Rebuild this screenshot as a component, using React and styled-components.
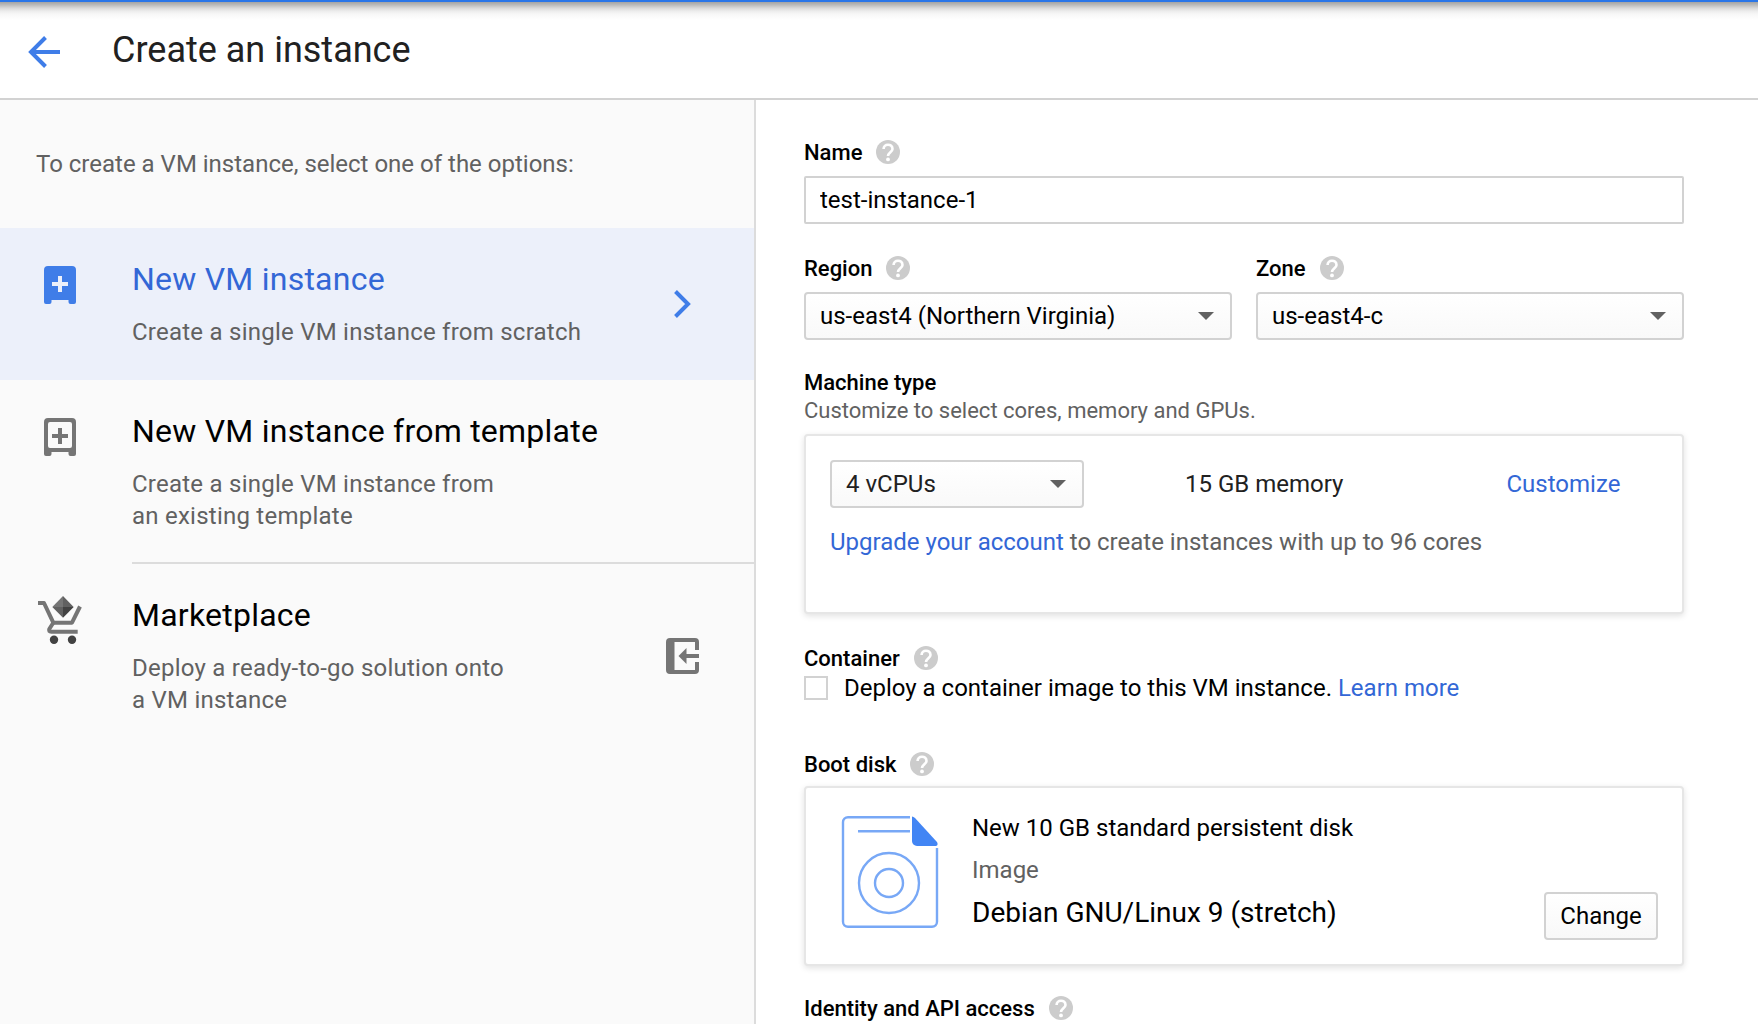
import React from "react";
import styled, { createGlobalStyle } from "styled-components";

const Global = createGlobalStyle`
  *, *::before, *::after { box-sizing: border-box; }
  html, body { margin: 0; padding: 0; background: #fff; }
  body {
    font-family: Roboto, "Liberation Sans", sans-serif;
    font-size: 24px;
    line-height: 32px;
    color: #000;
    overflow: hidden;
  }
  button, input { font: inherit; color: inherit; margin: 0; }
`;

const Page = styled.div`
  display: flex;
  flex-direction: column;
  height: 1024px;
  overflow: hidden;
`;

const Header = styled.header`
  flex: none;
  display: flex;
  align-items: center;
  height: 100px;
  padding-left: 28px;
  border-top: 2px solid #2a76e8;
  border-bottom: 2px solid #d2d2d2;
  background: linear-gradient(#a4a4a4 0, #bcbcbc 3px, #d8d8d8 6px, #ececec 9px, #f7f7f7 12px, #fff 18px);
`;

const BackArrow = styled.svg`
  width: 33px;
  height: 32px;
  margin: 4px 51px 0 0;
`;

const PageTitle = styled.h1`
  margin: 0;
  font-size: 36px;
  font-weight: 400;
  line-height: 48px;
  color: #212121;
`;

const Body = styled.div`
  flex: 1;
  display: flex;
  min-height: 0;
`;

const Sidebar = styled.nav`
  flex: none;
  width: 756px;
  border-right: 2px solid #dcdcdc;
  background: #fafafa;
`;

const Intro = styled.p`
  margin: 0;
  height: 128px;
  padding: 48px 36px 0;
  color: #616161;
`;

const Option = styled.a`
  display: flex;
  height: ${(p) => (p.$tall ? 184 : 152)}px;
  background: ${(p) => (p.$selected ? "#ecf0fa" : "transparent")};
  color: ${(p) => (p.$selected ? "#3367d6" : "#000")};
`;

const OptionIcon = styled.div`
  flex: none;
  width: 132px;
  padding: ${(p) => p.$pad};
  svg { display: block; }
`;

const OptionMain = styled.div`
  flex: 1;
  display: flex;
  align-items: center;
  border-bottom: ${(p) => (p.$divided ? "2px solid #dcdcdc" : "0")};
`;

const OptionText = styled.div`
  flex: 1;
  align-self: flex-start;
  padding-top: 31px;
`;

const OptionTitle = styled.div`
  font-size: 32px;
  line-height: 40px;
  letter-spacing: 0.24px;
`;

const OptionDesc = styled.div`
  margin-top: 17px;
  line-height: 32px;
  letter-spacing: 0.24px;
  color: #616161;
  white-space: pre-line;
`;

const OptionAction = styled.div`
  flex: none;
  width: 88px;
  svg { display: block; }
`;

const Form = styled.main`
  width: 928px;
  padding: 38px 0 0 48px;
  display: flex;
  flex-direction: column;
`;

const Label = styled.div`
  display: flex;
  align-items: center;
  gap: 14px;
  height: 28px;
  font-size: 22px;
  line-height: 28px;
  font-weight: 500;
  svg { flex: none; display: block; }
`;

const LabelText = styled.span`
  padding-top: 2px;
`;

const Field = styled.div`
  display: flex;
  flex-direction: column;
  gap: 10px;
`;

const FieldRow = styled.div`
  display: grid;
  grid-template-columns: 1fr 1fr;
  gap: 24px;
  margin-top: 30px;
`;

const TextInput = styled.input`
  width: 100%;
  height: 48px;
  padding: 0 14px;
  border: 2px solid #d2d2d2;
  border-radius: 2px;
  background: #fff;
  outline: 0;
`;

const SelectBox = styled.button`
  display: flex;
  align-items: center;
  justify-content: space-between;
  width: ${(p) => p.$width || "100%"};
  height: 48px;
  padding: 0 16px 0 14px;
  border: 2px solid #d2d2d2;
  border-radius: 4px;
  background: linear-gradient(#fff, #f9f9f9);
`;

const Caret = styled.span`
  width: 0;
  height: 0;
  border: 8px solid transparent;
  border-top-color: #616161;
  border-bottom-width: 0;
`;

const Section = styled.section`
  display: flex;
  flex-direction: column;
  margin-top: ${(p) => p.$top}px;
`;

const Hint = styled.div`
  padding-top: 1px;
  font-size: 22px;
  line-height: 28px;
  color: #616161;
`;

const Card = styled.div`
  height: 180px;
  margin-top: ${(p) => p.$top}px;
  padding: 24px;
  border: 2px solid #e6e6e6;
  border-radius: 4px;
  box-shadow: 0 2px 6px rgba(0, 0, 0, 0.12);
  background: #fff;
`;

const MachineRow = styled.div`
  display: grid;
  grid-template-columns: 355px 321.5px 1fr;
  align-items: center;
  color: #212121;
`;

const Link = styled.a`
  color: #3367d6;
`;

const Upgrade = styled.div`
  margin-top: 18px;
  color: #616161;
`;

const CheckRow = styled.label`
  display: flex;
  align-items: center;
  gap: 16px;
  height: 32px;
`;

const CheckBox = styled.span`
  width: 24px;
  height: 24px;
  border: 2px solid #d2d2d2;
  background: #fff;
`;

const DiskCard = styled(Card)`
  display: flex;
  align-items: flex-start;
`;

const DiskIcon = styled.svg`
  flex: none;
  width: 98px;
  height: 114px;
  margin: 3px 33px 0 11px;
`;

const DiskInfo = styled.div`
  flex: 1;
  display: flex;
  flex-direction: column;
`;

const DiskLine = styled.div`
  font-size: ${(p) => (p.$big ? 28 : 24)}px;
  line-height: ${(p) => p.$lh}px;
  color: ${(p) => (p.$muted ? "#616161" : "#000")};
`;

const PlainButton = styled.button`
  align-self: flex-end;
  width: 114px;
  height: 48px;
  padding: 0;
  border: 2px solid #d2d2d2;
  border-radius: 4px;
  background: linear-gradient(#fff, #f8f8f8);
`;

const Help = () => (
  <svg width="24" height="24" viewBox="0 0 24 24">
    <circle cx="12" cy="12" r="12" fill="#ccc" />
    <path d="M7.600 9C7.600 6.300 9.500 4.700 12 4.700s4.500 1.600 4.500 4.200c0 3.100-4.500 3.600-4.500 7.200" fill="none" stroke="#fff" strokeWidth="2.600" />
    <circle cx="12" cy="19.400" r="1.900" fill="#fff" />
  </svg>
);

const FieldLabel = ({ text, help = true }) => (
  <Label>
    <LabelText>{text}</LabelText>
    {help && <Help />}
  </Label>
);

const Select = ({ value, width }) => (
  <SelectBox type="button" $width={width}>
    {value}
    <Caret />
  </SelectBox>
);

const ServerSolid = () => (
  <svg width="32" height="38" viewBox="0 0 32 38">
    <path fill="#3f7de8" fillRule="evenodd" d="M4 0h24a4 4 0 0 1 4 4v32a2 2 0 0 1-2 2h-3.5a2 2 0 0 1-2-2v-2h-17v2a2 2 0 0 1-2 2H2a2 2 0 0 1-2-2V4a4 4 0 0 1 4-4zM14 10v6H8v4h6v6h4v-6h6v-4h-6v-6z" />
  </svg>
);

const ServerOutline = () => (
  <svg width="32" height="38" viewBox="0 0 32 38">
    <path fill="#757575" fillRule="evenodd" d="M4 0h24a4 4 0 0 1 4 4v32a2 2 0 0 1-2 2h-3.5a2 2 0 0 1-2-2v-2h-17v2a2 2 0 0 1-2 2H2a2 2 0 0 1-2-2V4a4 4 0 0 1 4-4zM6 4a2 2 0 0 0-2 2v22a2 2 0 0 0 2 2h20a2 2 0 0 0 2-2V6a2 2 0 0 0-2-2z" />
    <path fill="#757575" d="M14 10h4v6h6v4h-6v6h-4v-6H8v-4h6z" />
  </svg>
);

const Cart = () => (
  <svg width="44" height="50" viewBox="0 0 44 50">
    <path fill="none" stroke="#757575" strokeWidth="4" strokeLinejoin="round" d="M0 7h6l9.300 19.700H34L42 10.500" />
    <path fill="none" stroke="#757575" strokeWidth="4" strokeLinejoin="round" d="M15.300 26.700L11.300 33q-1 2.700 2 2.700H39.700" />
    <path fill="#757575" d="M25 0L14.300 11H25z" />
    <path fill="#616161" d="M25 0l10.700 11H25zM14.300 11L25 21.700V11z" />
    <path fill="#424242" d="M35.700 11L25 21.700V11z" />
    <circle cx="16" cy="43.700" r="4.200" fill="#424242" />
    <circle cx="34" cy="43.700" r="4.200" fill="#424242" />
  </svg>
);

const ExitIcon = () => (
  <svg width="33" height="36" viewBox="0 0 33 36">
    <path fill="#757575" d="M4 0h25a4 4 0 0 1 4 4v8h-4V4H8.500v28H29v-8h4v8a4 4 0 0 1-4 4H4a4 4 0 0 1-4-4V4a4 4 0 0 1 4-4z" />
    <path fill="#757575" d="M12.500 18L20.500 10v6H33v4H20.500v6z" />
  </svg>
);

export default function App() {
  return (
    <Page>
      <Global />
      <Header>
        <BackArrow viewBox="0 0 33 32">
          <path d="M32 16H3M17.500 1.500L3 16l14.500 14.500" fill="none" stroke="#3f7de8" strokeWidth="4" />
        </BackArrow>
        <PageTitle>Create an instance</PageTitle>
      </Header>
      <Body>
        <Sidebar>
          <Intro>To create a VM instance, select one of the options:</Intro>
          <Option $selected>
            <OptionIcon $pad="38px 0 0 44px"><ServerSolid /></OptionIcon>
            <OptionMain>
              <OptionText>
                <OptionTitle>New VM instance</OptionTitle>
                <OptionDesc>Create a single VM instance from scratch</OptionDesc>
              </OptionText>
              <OptionAction>
                <svg width="33" height="30" viewBox="0 0 33 30">
                  <path d="M9.500 2.500L22 15 9.500 27.500" fill="none" stroke="#3f7de8" strokeWidth="4" />
                </svg>
              </OptionAction>
            </OptionMain>
          </Option>
          <Option $tall>
            <OptionIcon $pad="38px 0 0 44px"><ServerOutline /></OptionIcon>
            <OptionMain $divided>
              <OptionText>
                <OptionTitle>New VM instance from template</OptionTitle>
                <OptionDesc>{"Create a single VM instance from\nan existing template"}</OptionDesc>
              </OptionText>
            </OptionMain>
          </Option>
          <Option $tall>
            <OptionIcon $pad="32px 0 0 38px"><Cart /></OptionIcon>
            <OptionMain>
              <OptionText>
                <OptionTitle>Marketplace</OptionTitle>
                <OptionDesc>{"Deploy a ready-to-go solution onto\na VM instance"}</OptionDesc>
              </OptionText>
              <OptionAction><ExitIcon /></OptionAction>
            </OptionMain>
          </Option>
        </Sidebar>
        <Form>
          <Field>
            <FieldLabel text="Name" />
            <TextInput defaultValue="test-instance-1" />
          </Field>
          <FieldRow>
            <Field>
              <FieldLabel text="Region" />
              <Select value="us-east4 (Northern Virginia)" />
            </Field>
            <Field>
              <FieldLabel text="Zone" />
              <Select value="us-east4-c" />
            </Field>
          </FieldRow>
          <Section $top={28}>
            <FieldLabel text="Machine type" help={false} />
            <Hint>Customize to select cores, memory and GPUs.</Hint>
            <Card $top={9}>
              <MachineRow>
                <Select value="4 vCPUs" width="254px" />
                <span>15 GB memory</span>
                <Link>Customize</Link>
              </MachineRow>
              <Upgrade><Link>Upgrade your account</Link> to create instances with up to 96 cores</Upgrade>
            </Card>
          </Section>
          <Section $top={30}>
            <FieldLabel text="Container" />
            <CheckRow>
              <CheckBox />
              <span>Deploy a container image to this VM instance. <Link>Learn more</Link></span>
            </CheckRow>
          </Section>
          <Section $top={46}>
            <FieldLabel text="Boot disk" />
            <DiskCard $top={8}>
              <DiskIcon viewBox="0 0 98 114">
                <g fill="none" stroke="#78a8f6" strokeWidth="2.400">
                  <path d="M69 2.200H7a5 5 0 0 0-5 5v99.600a5 5 0 0 0 5 5h84a5 5 0 0 0 5-5V33" />
                  <path d="M17 16.200h52" />
                  <circle cx="48" cy="68" r="30" />
                  <circle cx="48" cy="68" r="14" />
                </g>
                <path d="M71 1.500c1 0 2 .5 3 1.500l21.500 23.500c2 2.200 1 4.500-1 4.500H76a5 5 0 0 1-5-5z" fill="#4285f4" />
              </DiskIcon>
              <DiskInfo>
                <DiskLine $lh={32}>New 10 GB standard persistent disk</DiskLine>
                <DiskLine $lh={52} $muted>Image</DiskLine>
                <DiskLine $lh={34} $big>Debian GNU/Linux 9 (stretch)</DiskLine>
              </DiskInfo>
              <PlainButton type="button">Change</PlainButton>
            </DiskCard>
          </Section>
          <Section $top={28}>
            <FieldLabel text="Identity and API access" />
          </Section>
        </Form>
      </Body>
    </Page>
  );
}
